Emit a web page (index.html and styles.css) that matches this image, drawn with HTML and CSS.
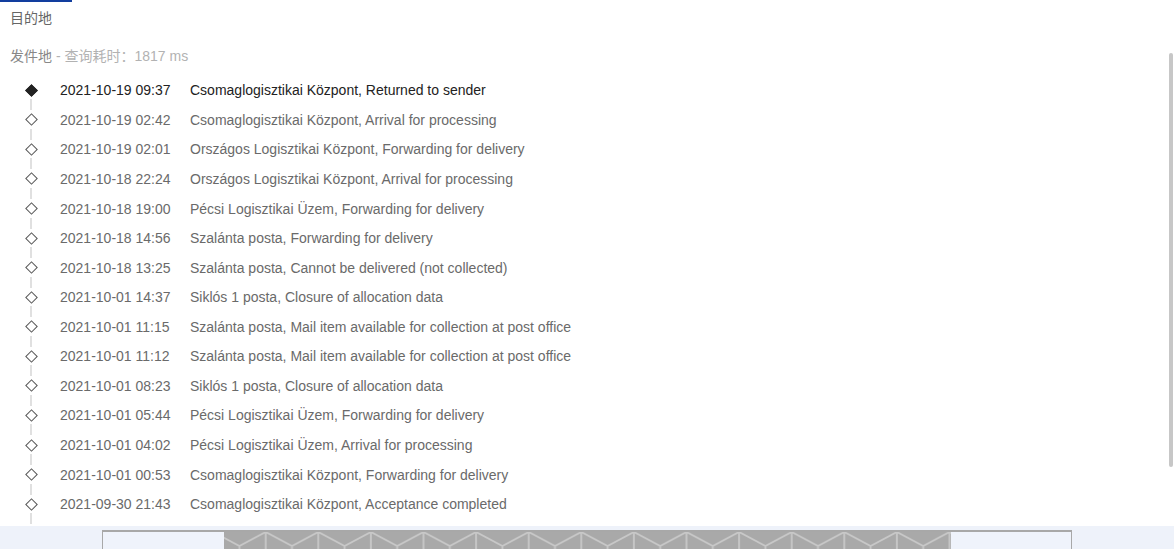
FILE: index.html
```html
<!DOCTYPE html>
<html lang="zh">
<head>
<meta charset="utf-8">
<title>Tracking</title>
<link rel="stylesheet" href="styles.css">
</head>
<body>
<div class="page">
  <div class="tab-line"></div>
  <div class="dest">目的地</div>
  <div class="origin"><span class="origin-label">发件地</span><span class="origin-meta"> - 查询耗时：1817 ms</span></div>
  <ul class="timeline">
    <li class="row current"><span class="marker"></span><span class="date">2021-10-19 09:37</span><span class="desc">Csomaglogisztikai Központ, Returned to sender</span></li>
    <li class="row"><span class="marker"></span><span class="date">2021-10-19 02:42</span><span class="desc">Csomaglogisztikai Központ, Arrival for processing</span></li>
    <li class="row"><span class="marker"></span><span class="date">2021-10-19 02:01</span><span class="desc">Országos Logisztikai Központ, Forwarding for delivery</span></li>
    <li class="row"><span class="marker"></span><span class="date">2021-10-18 22:24</span><span class="desc">Országos Logisztikai Központ, Arrival for processing</span></li>
    <li class="row"><span class="marker"></span><span class="date">2021-10-18 19:00</span><span class="desc">Pécsi Logisztikai Üzem, Forwarding for delivery</span></li>
    <li class="row"><span class="marker"></span><span class="date">2021-10-18 14:56</span><span class="desc">Szalánta posta, Forwarding for delivery</span></li>
    <li class="row"><span class="marker"></span><span class="date">2021-10-18 13:25</span><span class="desc">Szalánta posta, Cannot be delivered (not collected)</span></li>
    <li class="row"><span class="marker"></span><span class="date">2021-10-01 14:37</span><span class="desc">Siklós 1 posta, Closure of allocation data</span></li>
    <li class="row"><span class="marker"></span><span class="date">2021-10-01 11:15</span><span class="desc">Szalánta posta, Mail item available for collection at post office</span></li>
    <li class="row"><span class="marker"></span><span class="date">2021-10-01 11:12</span><span class="desc">Szalánta posta, Mail item available for collection at post office</span></li>
    <li class="row"><span class="marker"></span><span class="date">2021-10-01 08:23</span><span class="desc">Siklós 1 posta, Closure of allocation data</span></li>
    <li class="row"><span class="marker"></span><span class="date">2021-10-01 05:44</span><span class="desc">Pécsi Logisztikai Üzem, Forwarding for delivery</span></li>
    <li class="row"><span class="marker"></span><span class="date">2021-10-01 04:02</span><span class="desc">Pécsi Logisztikai Üzem, Arrival for processing</span></li>
    <li class="row"><span class="marker"></span><span class="date">2021-10-01 00:53</span><span class="desc">Csomaglogisztikai Központ, Forwarding for delivery</span></li>
    <li class="row"><span class="marker"></span><span class="date">2021-09-30 21:43</span><span class="desc">Csomaglogisztikai Központ, Acceptance completed</span></li>
  </ul>
  <div class="scrollbar"></div>
</div>
<div class="footer">
  <div class="frame">
    <div class="barcode">
      <svg width="727" height="30" xmlns="http://www.w3.org/2000/svg">
        <defs>
          <pattern id="cubes" x="-10.9" y="0" width="52.6" height="60" patternUnits="userSpaceOnUse">
            <path d="M0 0 V60 M52.6 0 V60 M0 0 L26.3 14 L52.6 0 M26.3 14 V60" fill="none" stroke="#c8c8c8" stroke-width="1.8"/>
          </pattern>
        </defs>
        <rect width="727" height="30" fill="#a9a9a9"/>
        <rect width="727" height="30" fill="url(#cubes)"/>
      </svg>
    </div>
  </div>
</div>
</body>
</html>
```

FILE: styles.css
```css
html, body {
  margin: 0;
  padding: 0;
  background: #ffffff;
  overflow: hidden;
}

body {
  font-family: "Liberation Sans", Arial, "Noto Sans CJK SC", sans-serif;
  font-size: 14px;
  color: #666666;
  width: 1174px;
  height: 549px;
}

.page {
  position: relative;
  height: 526px;
  overflow: hidden;
}

.tab-line {
  width: 72px;
  height: 2px;
  background: #123e9e;
}

.dest {
  margin-top: 6px;
  padding-left: 10px;
  line-height: 20px;
  color: #666666;
  font-family: "Liberation Sans", "Noto Sans CJK SC", sans-serif;
}

.origin {
  margin-top: 18px;
  padding-left: 10px;
  line-height: 20px;
  font-family: "Liberation Sans", "Noto Sans CJK SC", sans-serif;
}

.origin-label {
  color: #888888;
}

.origin-meta {
  color: #b2b2b2;
}

.timeline {
  list-style: none;
  margin: 9.5px 0 0 0;
  padding: 0;
}

.row {
  display: flex;
  align-items: center;
  height: 29.57px;
  color: #6a6a6a;
  white-space: nowrap;
}

.row.current {
  color: #222222;
}

.marker {
  position: relative;
  flex: none;
  width: 60px;
  height: 100%;
  display: flex;
  align-items: center;
}

.marker::before {
  content: "";
  display: block;
  width: 7px;
  height: 7px;
  margin-left: 26.5px;
  border: 1px solid #555555;
  background: #ffffff;
  box-sizing: content-box;
  transform: rotate(45deg);
}

.row.current .marker::before {
  background: #222222;
  border-color: #222222;
}

.marker::after {
  content: "";
  position: absolute;
  left: 30px;
  top: calc(50% + 9px);
  width: 2px;
  height: 11px;
  background: #e0e0e0;
}

.date {
  flex: none;
  width: 130px;
}

.desc {
  flex: none;
}

.scrollbar {
  position: absolute;
  left: 1169px;
  top: 53px;
  width: 4px;
  height: 414px;
  border-radius: 2px;
  background: #c7c7c7;
}

.footer {
  height: 23px;
  background: #eef2fa;
  padding-top: 4px;
  box-sizing: border-box;
  overflow: hidden;
}

.frame {
  margin-left: 102px;
  width: 970px;
  height: 40px;
  box-sizing: border-box;
  border: 1px solid #a8a8a8;
  border-top-width: 2px;
  background: #eff3fb;
  padding-left: 121px;
}

.barcode {
  width: 727px;
  height: 30px;
  line-height: 0;
}

.barcode svg {
  display: block;
}
```
